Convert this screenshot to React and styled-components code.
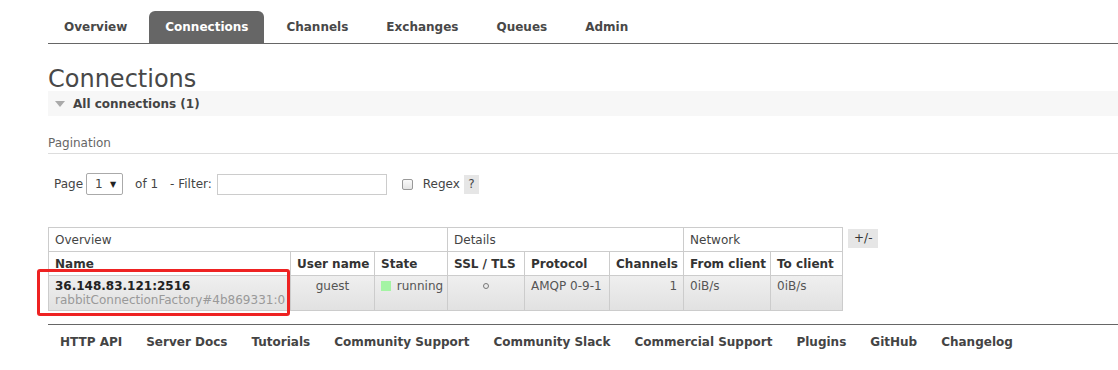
import React from 'react';
import styled, { createGlobalStyle } from 'styled-components';

const GlobalStyle = createGlobalStyle`
    html, body {
        margin: 0;
        padding: 0;
        background: #fff;
    }
    body {
        font-family: "DejaVu Sans", Verdana, sans-serif;
        font-size: 12px;
        color: #484848;
        overflow: hidden;
    }
`;

const tabs = ['Overview', 'Connections', 'Channels', 'Exchanges', 'Queues', 'Admin'];
const footerLinks = ['HTTP API', 'Server Docs', 'Tutorials', 'Community Support', 'Community Slack', 'Commercial Support', 'Plugins', 'GitHub', 'Changelog'];

const columns = [
    { title: 'Name', w: 242 },
    { title: 'User name', w: 84 },
    { title: 'State', w: 73 },
    { title: 'SSL / TLS', w: 77 },
    { title: 'Protocol', w: 85 },
    { title: 'Channels', w: 74 },
    { title: 'From client', w: 87 },
    { title: 'To client', w: 72 },
];

const groups = [
    { title: 'Overview', span: 3 },
    { title: 'Details', span: 3 },
    { title: 'Network', span: 2 },
];

export default function App() {
    return (
        <Page>
            <GlobalStyle />
            <Tabs>
                {tabs.map(t => (
                    <Tab key={t} $active={t === 'Connections'}>{t}</Tab>
                ))}
            </Tabs>

            <Title>Connections</Title>
            <SectionBar>
                <Caret />
                All connections (1)
            </SectionBar>

            <SubTitle>Pagination</SubTitle>
            <PagerRow>
                <span>Page</span>
                <PageSelect>
                    <span>1</span>
                    <SelectArrow>▼</SelectArrow>
                </PageSelect>
                <Label $ml={12}>of 1</Label>
                <Label $ml={12}>- Filter:</Label>
                <FilterInput />
                <CheckBox />
                <Label $ml={10}>Regex</Label>
                <HelpBox>?</HelpBox>
            </PagerRow>

            <TableArea>
                <TableWrap>
                    <Grid>
                        <colgroup>
                            {columns.map(c => <Col key={c.title} $w={c.w} />)}
                        </colgroup>
                        <thead>
                            <tr>
                                {groups.map(g => (
                                    <GroupTh key={g.title} colSpan={g.span}>{g.title}</GroupTh>
                                ))}
                            </tr>
                            <tr>
                                {columns.map(c => <HeadTh key={c.title}>{c.title}</HeadTh>)}
                            </tr>
                        </thead>
                        <tbody>
                            <DataRow>
                                <Td>
                                    <ConnName>36.148.83.121:2516</ConnName>
                                    <ConnSub>rabbitConnectionFactory#4b869331:0</ConnSub>
                                </Td>
                                <Td $align="center">guest</Td>
                                <Td>
                                    <StateBox /> running
                                </Td>
                                <Td $align="center"><Ring /></Td>
                                <Td>AMQP 0-9-1</Td>
                                <Td $align="right">1</Td>
                                <Td>0iB/s</Td>
                                <Td>0iB/s</Td>
                            </DataRow>
                        </tbody>
                    </Grid>
                    <Highlight />
                </TableWrap>
                <ToggleBtn>+/-</ToggleBtn>
            </TableArea>

            <Footer>
                {footerLinks.map(l => <FooterLink key={l}>{l}</FooterLink>)}
            </Footer>
        </Page>
    );
}

const Page = styled.div`
    padding: 11px 0 0 48px;
`;

const Tabs = styled.ul`
    display: flex;
    margin: 0;
    padding: 0;
    list-style: none;
    border-bottom: 1px solid #666;
`;

const Tab = styled.li`
    height: 32px;
    line-height: 33px;
    padding: 0 16px;
    margin-right: 6px;
    font-weight: bold;
    border-radius: 6px 6px 0 0;
    color: ${p => (p.$active ? '#fff' : '#484848')};
    background: ${p => (p.$active ? '#666' : 'transparent')};
`;

const Title = styled.h1`
    margin: 23px 0 0;
    height: 24px;
    line-height: 24px;
    font-size: 24px;
    font-weight: normal;
    color: #484848;
`;

const SectionBar = styled.div`
    display: flex;
    align-items: center;
    height: 25px;
    padding-left: 7px;
    background: #f7f7f7;
    font-weight: bold;
    color: #444;
`;

const Caret = styled.span`
    width: 0;
    height: 0;
    margin-right: 8px;
    border-left: 5px solid transparent;
    border-right: 5px solid transparent;
    border-top: 6px solid #aaa;
`;

const SubTitle = styled.div`
    margin-top: 19px;
    line-height: 17px;
    padding-bottom: 1px;
    border-bottom: 1px solid #ddd;
    color: #666;
`;

const PagerRow = styled.div`
    display: flex;
    align-items: center;
    height: 22px;
    margin-top: 19px;
    padding-left: 6px;
    color: #444;
`;

const Label = styled.span`
    margin-left: ${p => p.$ml}px;
`;

const PageSelect = styled.div`
    display: flex;
    align-items: center;
    justify-content: space-between;
    box-sizing: border-box;
    width: 37px;
    height: 22px;
    margin-left: 3px;
    padding: 0 6px 0 8px;
    border: 1px solid #aaa;
    border-radius: 2px;
`;

const SelectArrow = styled.span`
    font-size: 8px;
    color: #222;
`;

const FilterInput = styled.div`
    box-sizing: border-box;
    width: 170px;
    height: 21px;
    margin-left: 5px;
    border: 1px solid #ccc;
`;

const CheckBox = styled.div`
    box-sizing: border-box;
    width: 11px;
    height: 11px;
    margin-left: 15px;
    border: 1px solid #999;
    border-radius: 2px;
    background: linear-gradient(#fafafa, #e4e4e4);
`;

const HelpBox = styled.span`
    display: flex;
    align-items: center;
    justify-content: center;
    width: 15px;
    height: 19px;
    margin-left: 4px;
    background: #e6e6e6;
`;

const TableArea = styled.div`
    display: flex;
    align-items: flex-start;
    margin-top: 32px;
`;

const TableWrap = styled.div`
    position: relative;
`;

const Grid = styled.table`
    table-layout: fixed;
    width: 794px;
    border-collapse: collapse;
    border: 1px solid #ccc;
`;

const Col = styled.col`
    width: ${p => p.$w}px;
`;

const GroupTh = styled.th`
    height: 23px;
    padding: 0 6px;
    border: 1px solid #ccc;
    text-align: left;
    font-weight: normal;
    color: #444;
`;

const HeadTh = styled.th`
    height: 23px;
    padding: 0 6px;
    border: 1px solid #ccc;
    text-align: left;
    white-space: nowrap;
    font-weight: bold;
    color: #333;
`;

const DataRow = styled.tr`
    background: linear-gradient(#efefef, #e1e1e1);
`;

const Td = styled.td`
    height: 35px;
    padding: 3px 6px 0;
    box-sizing: border-box;
    vertical-align: top;
    line-height: 14px;
    border: 1px solid #ccc;
    text-align: ${p => p.$align || 'left'};
    white-space: nowrap;
    color: #555;
`;

const ConnName = styled.div`
    font-weight: bold;
    color: #222;
`;

const ConnSub = styled.div`
    color: #999;
`;

const StateBox = styled.span`
    display: inline-block;
    width: 10px;
    height: 10px;
    margin-right: 2px;
    vertical-align: -1px;
    background: #a4f4a4;
`;

const Ring = styled.span`
    display: inline-block;
    width: 4px;
    height: 4px;
    border: 1px solid #777;
    border-radius: 50%;
    vertical-align: 1px;
`;

const Highlight = styled.div`
    position: absolute;
    left: -11px;
    top: 42px;
    width: 253px;
    height: 47px;
    box-sizing: border-box;
    border: 3px solid #ee2222;
    border-radius: 3px;
    pointer-events: none;
`;

const ToggleBtn = styled.span`
    margin: 2px 0 0 5px;
    height: 19px;
    line-height: 19px;
    padding: 0 6px;
    background: #e6e6e6;
    color: #333;
`;

const Footer = styled.div`
    display: flex;
    margin-top: 13px;
    padding-top: 10px;
    border-top: 1px solid #666;
`;

const FooterLink = styled.span`
    padding: 0 12px;
    line-height: 14px;
    font-weight: bold;
    color: #444;
    white-space: nowrap;
`;
